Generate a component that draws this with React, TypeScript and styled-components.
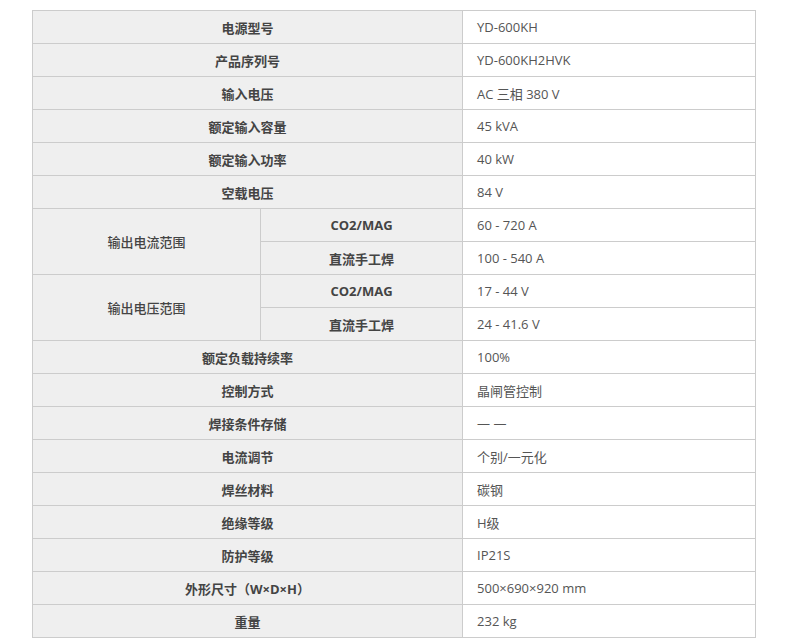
import styled, { createGlobalStyle } from 'styled-components';

const GlobalStyle = createGlobalStyle`
  body {
    margin: 0;
    background: #fff;
    font-family: "Open Sans", "Noto Sans CJK SC", sans-serif;
  }
`;

interface SpecRow {
  label: string;
  value: string;
}

const topRows: SpecRow[] = [
  { label: '电源型号', value: 'YD-600KH' },
  { label: '产品序列号', value: 'YD-600KH2HVK' },
  { label: '输入电压', value: 'AC 三相 380 V' },
  { label: '额定输入容量', value: '45 kVA' },
  { label: '额定输入功率', value: '40 kW' },
  { label: '空载电压', value: '84 V' },
];

const groupRows = [
  {
    label: '输出电流范围',
    items: [
      { label: 'CO2/MAG', value: '60 - 720 A' },
      { label: '直流手工焊', value: '100 - 540 A' },
    ],
  },
  {
    label: '输出电压范围',
    items: [
      { label: 'CO2/MAG', value: '17 - 44 V' },
      { label: '直流手工焊', value: '24 - 41.6 V' },
    ],
  },
];

const bottomRows: SpecRow[] = [
  { label: '额定负载持续率', value: '100%' },
  { label: '控制方式', value: '晶闸管控制' },
  { label: '焊接条件存储', value: '— —' },
  { label: '电流调节', value: '个别/一元化' },
  { label: '焊丝材料', value: '碳钢' },
  { label: '绝缘等级', value: 'H级' },
  { label: '防护等级', value: 'IP21S' },
  { label: '外形尺寸（W×D×H）', value: '500×690×920 mm' },
  { label: '重量', value: '232 kg' },
];

export default function App() {
  return (
    <>
      <GlobalStyle />
      <Page>
        <SpecTable>
          <colgroup>
            <col style={{ width: 228 }} />
            <col style={{ width: 202 }} />
            <col style={{ width: 293 }} />
          </colgroup>
          <tbody>
            {topRows.map((row) => (
              <tr key={row.label}>
                <LabelCell colSpan={2}>{row.label}</LabelCell>
                <ValueCell>{row.value}</ValueCell>
              </tr>
            ))}
            {groupRows.map((group) =>
              group.items.map((item, i) => (
                <tr key={group.label + item.label}>
                  {i === 0 && (
                    <LabelCell rowSpan={group.items.length} $light>
                      {group.label}
                    </LabelCell>
                  )}
                  <LabelCell>{item.label}</LabelCell>
                  <ValueCell>{item.value}</ValueCell>
                </tr>
              ))
            )}
            {bottomRows.map((row) => (
              <tr key={row.label}>
                <LabelCell colSpan={2}>{row.label}</LabelCell>
                <ValueCell>{row.value}</ValueCell>
              </tr>
            ))}
          </tbody>
        </SpecTable>
      </Page>
    </>
  );
}

const Page = styled.div`
  padding: 10px 0 0 32px;
`;

const SpecTable = styled.table`
  border-collapse: collapse;
  table-layout: fixed;
  width: 724px;
  font-size: 13px;
`;

const LabelCell = styled.td<{ $light?: boolean }>`
  height: 32px;
  padding: 0;
  border: 1px solid #cccccc;
  background: #efefef;
  color: #444;
  font-weight: ${(p) => (p.$light ? 500 : 700)};
  text-align: center;
  vertical-align: middle;
  font-family: "Open Sans", "Noto Sans CJK SC", sans-serif;
`;

const ValueCell = styled.td`
  height: 32px;
  padding: 0 0 0 14px;
  border: 1px solid #cccccc;
  background: #fff;
  color: #555;
  text-align: left;
  vertical-align: middle;
`;
